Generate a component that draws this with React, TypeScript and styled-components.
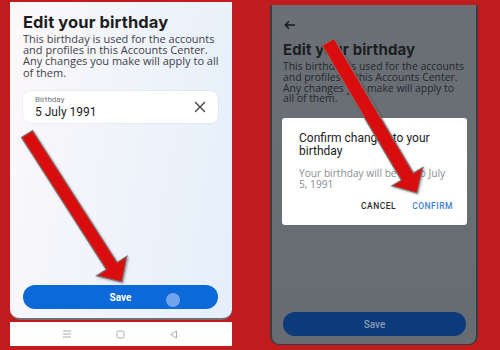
import React from 'react';
import styled, { createGlobalStyle } from 'styled-components';

const GlobalStyle = createGlobalStyle`
  html, body {
    margin: 0;
    padding: 0;
    background: #c01b1d;
  }
  * {
    box-sizing: border-box;
  }
`;

const Canvas = styled.div`
  position: relative;
  width: 500px;
  height: 350px;
  overflow: hidden;
  background: #c01b1d;
  display: flex;
  align-items: flex-start;
  gap: 38px;
  padding: 2px 22px 0 10px;
  font-family: Roboto, 'Liberation Sans', sans-serif;
`;

const LeftPhone = styled.div`
  flex: none;
  width: 222px;
  display: flex;
  flex-direction: column;
`;

const LeftScreen = styled.div`
  height: 318px;
  display: flex;
  flex-direction: column;
  padding: 0 14px 9px 13px;
  background: linear-gradient(100deg, #fcf8fa 0%, #f1f4fa 45%, #e4effb 100%);
  border-bottom: 2px solid #6f7072;
  border-radius: 0 0 10px 10px;
`;

const Title = styled.h1<{ dim?: boolean }>`
  margin: ${({ dim }) => (dim ? '9px 0 0' : '10px 0 0')};
  font-family: Inter, Roboto, sans-serif;
  font-size: ${({ dim }) => (dim ? '15px' : '16.5px')};
  line-height: 20px;
  font-weight: 700;
  color: ${({ dim }) => (dim ? '#1b1d21' : '#1c1e21')};
  letter-spacing: 0.1px;
`;

const Description = styled.p<{ dim?: boolean }>`
  margin: ${({ dim }) => (dim ? '1px 0 0' : '1px -8px 0 0')};
  font-family: 'Open Sans', Roboto, sans-serif;
  font-size: ${({ dim }) => (dim ? '10.4px' : '11px')};
  line-height: ${({ dim }) => (dim ? '10.8px' : '11.2px')};
  color: ${({ dim }) => (dim ? '#24272b' : '#3e4246')};
`;

const InputBox = styled.div`
  margin-top: 13px;
  height: 32px;
  border-radius: 8px;
  background: #ffffff;
  display: flex;
  align-items: center;
  padding: 0 12px 0 12px;
  box-shadow: 0 0 0 1px rgba(0, 0, 0, 0.04);
`;

const InputText = styled.div`
  flex: 1;
  display: flex;
  flex-direction: column;
`;

const InputLabel = styled.span`
  font-size: 8px;
  line-height: 10px;
  color: #70757b;
`;

const InputValue = styled.span`
  font-size: 12px;
  line-height: 14px;
  color: #1c1e21;
`;

const Spacer = styled.div`
  flex: 1;
`;

const SaveButton = styled.div<{ dim?: boolean }>`
  position: relative;
  height: 24px;
  border-radius: 12px;
  background: ${({ dim }) => (dim ? '#0c3a7b' : '#0c69d9')};
  color: ${({ dim }) => (dim ? '#8a9bb2' : '#ffffff')};
  font-size: 10px;
  font-weight: ${({ dim }) => (dim ? 500 : 700)};
  display: flex;
  align-items: center;
  justify-content: center;
`;

const TouchDot = styled.span`
  position: absolute;
  left: 143px;
  top: 8px;
  width: 14px;
  height: 14px;
  border-radius: 50%;
  background: rgba(150, 185, 245, 0.75);
`;

const NavBar = styled.div`
  margin-top: 2px;
  height: 24px;
  background: #ffffff;
  display: flex;
  align-items: center;
  justify-content: space-between;
  padding: 0 54px 0 52px;
`;

const RightPhone = styled.div`
  flex: none;
  position: relative;
  width: 208px;
  height: 340px;
  margin-top: 3px;
  display: flex;
  flex-direction: column;
  padding: 0 10px 8px 11px;
  background: linear-gradient(180deg, #6b7076 0%, #676c72 100%);
  border-left: 2px solid #3a3c3f;
  border-right: 2px solid #3a3c3f;
  border-bottom: 1px solid #3a3c3f;
  border-radius: 0 0 9px 9px;
`;

const BackArrow = styled.div`
  margin-top: 14px;
  margin-left: 1px;
  height: 12px;
  display: flex;
  align-items: center;
`;

const Dialog = styled.div`
  position: absolute;
  left: 10px;
  top: 113px;
  width: 185px;
  height: 107px;
  background: #ffffff;
  border-radius: 3px;
  padding: 14px 14px 0 17px;
  display: flex;
  flex-direction: column;
`;

const DialogTitle = styled.div`
  font-size: 12px;
  line-height: 12.5px;
  color: #202124;
`;

const DialogBody = styled.div`
  margin-top: 11px;
  white-space: pre-line;
  font-family: 'Open Sans', Roboto, sans-serif;
  font-size: 10.2px;
  line-height: 11px;
  color: #8a8d91;
`;

const DialogActions = styled.div`
  margin-top: 11px;
  display: flex;
  justify-content: flex-end;
  gap: 16px;
`;

const ActionButton = styled.span<{ primary?: boolean }>`
  font-size: 8.5px;
  font-weight: 500;
  letter-spacing: 0.5px;
  color: ${({ primary }) => (primary ? '#3a7fd2' : '#2b2d30')};
`;

const Overlay = styled.svg`
  position: absolute;
  left: 0;
  top: 0;
  pointer-events: none;
`;

function arrowPoints(
  x1: number,
  y1: number,
  x2: number,
  y2: number,
  shaft: number,
  headW: number,
  headL: number
) {
  const dx = x2 - x1;
  const dy = y2 - y1;
  const len = Math.hypot(dx, dy);
  const ux = dx / len;
  const uy = dy / len;
  const nx = -uy;
  const ny = ux;
  const bx = x2 - ux * headL;
  const by = y2 - uy * headL;
  const s = shaft / 2;
  const h = headW / 2;
  const pts = [
    [x1 + nx * s, y1 + ny * s],
    [bx + nx * s, by + ny * s],
    [bx + nx * h, by + ny * h],
    [x2, y2],
    [bx - nx * h, by - ny * h],
    [bx - nx * s, by - ny * s],
    [x1 - nx * s, y1 - ny * s],
  ];
  return pts.map((p) => `${p[0].toFixed(1)},${p[1].toFixed(1)}`).join(' ');
}

function CloseIcon() {
  return (
    <svg width="12" height="12" viewBox="0 0 12 12">
      <path d="M1.5 1.5 L10.5 10.5 M10.5 1.5 L1.5 10.5" stroke="#3c3f44" strokeWidth="1.3" strokeLinecap="round" />
    </svg>
  );
}

function NavIcons() {
  return (
    <>
      <svg width="10" height="8" viewBox="0 0 10 8">
        <path d="M1 1 H9 M1 4 H9 M1 7 H9" stroke="#a3a5a8" strokeWidth="0.9" />
      </svg>
      <svg width="9" height="9" viewBox="0 0 9 9">
        <rect x="1" y="1" width="7" height="7" rx="1.5" fill="none" stroke="#a3a5a8" strokeWidth="0.9" />
      </svg>
      <svg width="9" height="9" viewBox="0 0 9 9">
        <path d="M7.5 1 L1.5 4.5 L7.5 8 Z" fill="none" stroke="#a3a5a8" strokeWidth="0.9" strokeLinejoin="round" />
      </svg>
    </>
  );
}

function BackIcon() {
  return (
    <svg width="12" height="10" viewBox="0 0 12 10">
      <path d="M11 5 H1.5 M5 1.2 L1.2 5 L5 8.8" fill="none" stroke="#15171a" strokeWidth="1.3" />
    </svg>
  );
}

const description =
  'This birthday is used for the accounts and profiles in this Accounts Center. Any changes you make will apply to all of them.';

export default function App() {
  return (
    <>
      <GlobalStyle />
      <Canvas>
        <LeftPhone>
          <LeftScreen>
            <Title>Edit your birthday</Title>
            <Description>{description}</Description>
            <InputBox>
              <InputText>
                <InputLabel>Birthday</InputLabel>
                <InputValue>5 July 1991</InputValue>
              </InputText>
              <CloseIcon />
            </InputBox>
            <Spacer />
            <SaveButton>
              Save
              <TouchDot />
            </SaveButton>
          </LeftScreen>
          <NavBar>
            <NavIcons />
          </NavBar>
        </LeftPhone>

        <RightPhone>
          <BackArrow>
            <BackIcon />
          </BackArrow>
          <Title dim>Edit your birthday</Title>
          <Description dim>{description}</Description>
          <Spacer />
          <SaveButton dim>Save</SaveButton>
          <Dialog>
            <DialogTitle>Confirm changes to your birthday</DialogTitle>
            <DialogBody>{'Your birthday will be set to July\n5, 1991'}</DialogBody>
            <DialogActions>
              <ActionButton>CANCEL</ActionButton>
              <ActionButton primary>CONFIRM</ActionButton>
            </DialogActions>
          </Dialog>
        </RightPhone>

        <Overlay width="500" height="350" viewBox="0 0 500 350">
          <defs>
            <filter id="arrowShadow" x="-20%" y="-20%" width="140%" height="140%">
              <feDropShadow dx="1" dy="1" stdDeviation="0.8" floodColor="#000" floodOpacity="0.35" />
            </filter>
          </defs>
          <polygon
            points={arrowPoints(27, 134, 122, 282, 13, 36, 19)}
            fill="#d90f0f"
            stroke="#7f6d6d"
            strokeWidth="1.2"
            strokeLinejoin="miter"
            filter="url(#arrowShadow)"
          />
          <polygon
            points={arrowPoints(328, 42, 417, 193, 14, 36, 19)}
            fill="#d90f0f"
            stroke="#7f6d6d"
            strokeWidth="1.2"
            strokeLinejoin="miter"
            filter="url(#arrowShadow)"
          />
        </Overlay>
      </Canvas>
    </>
  );
}
